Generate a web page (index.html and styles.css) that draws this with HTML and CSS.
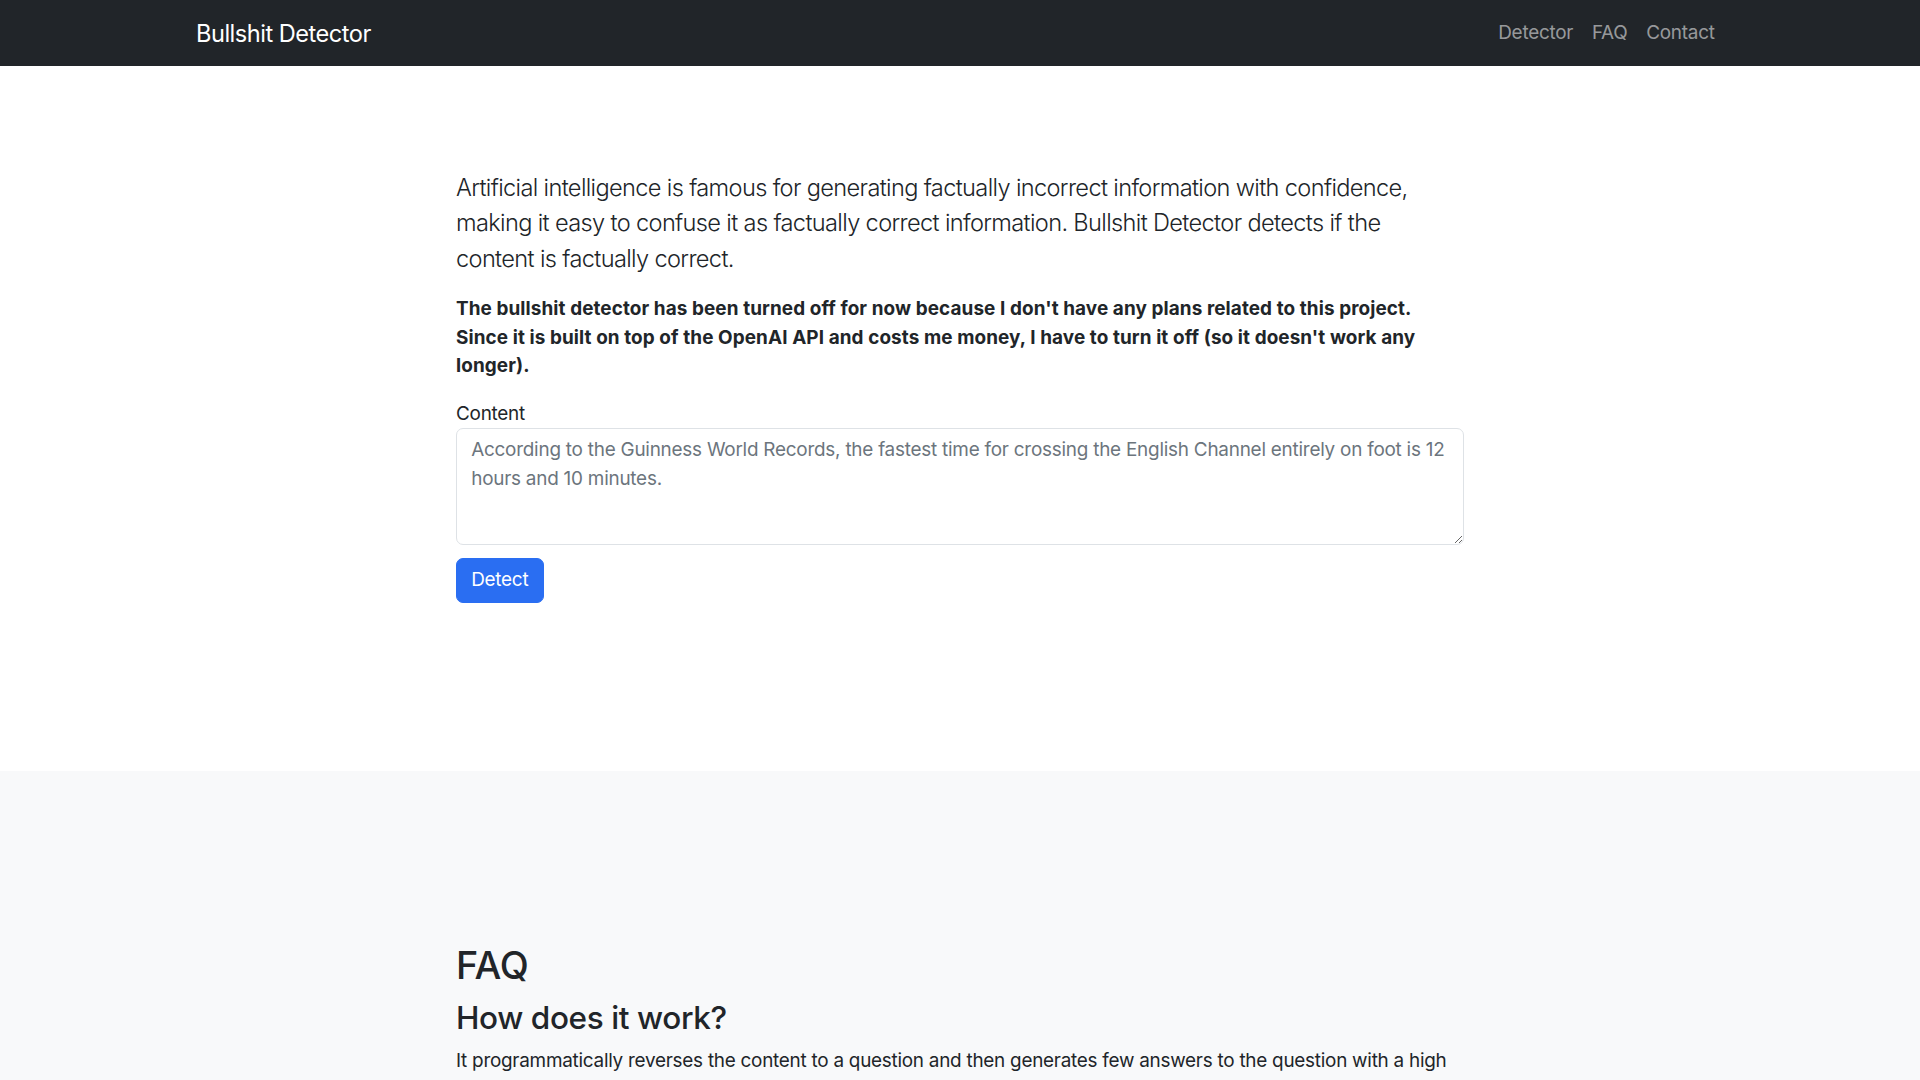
FILE: index.html
```html
<!DOCTYPE html>
<html lang="en">
<head>
<meta charset="utf-8">
<title>Bullshit Detector</title>
<link rel="stylesheet" href="styles.css">
</head>
<body>
<nav class="navbar">
  <div class="nav-inner">
    <a class="brand" href="#">Bullshit Detector</a>
    <ul class="nav-links">
      <li><a href="#detector">Detector</a></li>
      <li><a href="#faq">FAQ</a></li>
      <li><a href="#contact">Contact</a></li>
    </ul>
  </div>
</nav>

<section class="detector" id="detector">
  <div class="col">
    <p class="lead">Artificial intelligence is famous for generating factually incorrect information with confidence, making it easy to confuse it as factually correct information. Bullshit Detector detects if the content is factually correct.</p>
    <p class="notice">The bullshit detector has been turned off for now because I don't have any plans related to this project. Since it is built on top of the OpenAI API and costs me money, I have to turn it off (so it doesn't work any longer).</p>
    <form class="form">
      <label class="form-label" for="content">Content</label>
      <textarea class="form-control" id="content">According to the Guinness World Records, the fastest time for crossing the English Channel entirely on foot is 12 hours and 10 minutes.</textarea>
      <button class="btn" type="button">Detect</button>
    </form>
  </div>
</section>

<section class="faq" id="faq">
  <div class="col">
    <h2 class="faq-title">FAQ</h2>
    <h3 class="faq-q">How does it work?</h3>
    <p class="faq-a">It programmatically reverses the content to a question and then generates few answers to the question with a high</p>
  </div>
</section>
</body>
</html>
```

FILE: styles.css
```css
* { box-sizing: border-box; }

html, body {
  margin: 0;
  padding: 0;
}

body {
  font-family: Inter, "Noto Sans", "Liberation Sans", sans-serif;
  font-size: 18.9px;
  line-height: 1.5;
  color: #212529;
  background: #fff;
  letter-spacing: -0.25px;
}

a { text-decoration: none; }

.navbar {
  background: #212529;
  height: 66px;
}

.nav-inner {
  height: 100%;
  padding: 0 196px;
  display: flex;
  align-items: center;
  justify-content: space-between;
}

.brand {
  color: #fff;
  font-size: 23.6px;
  line-height: 35px;
  letter-spacing: -0.5px;
}

.nav-links {
  list-style: none;
  margin: 0;
  padding: 0;
  display: flex;
}

.nav-links a {
  display: block;
  padding: 0 9.4px;
  color: rgba(255, 255, 255, 0.55);
  line-height: 28px;
}

.col {
  max-width: 1008px;
  margin: 0 auto;
}

.detector {
  padding: 104px 0 168px;
}

.lead {
  font-size: 23.6px;
  line-height: 35.4px;
  font-weight: 300;
  letter-spacing: -0.65px;
  margin: 0 0 19px;
}

.notice {
  font-weight: 700;
  line-height: 28.3px;
  letter-spacing: 0.1px;
  margin: 0 0 20px;
}

.form {
  display: flex;
  flex-direction: column;
  align-items: flex-start;
}

.form-label {
  line-height: 28.3px;
  margin-bottom: 0;
}

.form-control {
  width: 100%;
  height: 117px;
  padding: 7px 14.2px;
  font: inherit;
  letter-spacing: -0.23px;
  line-height: 28.3px;
  color: #6c757d;
  border: 1px solid #dee2e6;
  border-radius: 7px;
  background: #fff;
  resize: vertical;
}

.btn {
  margin-top: 13px;
  font: inherit;
  letter-spacing: inherit;
  line-height: 28.3px;
  padding: 7px 14.2px;
  color: #fff;
  background: #2a6ef2;
  border: 1px solid #2a6ef2;
  border-radius: 7px;
  cursor: pointer;
}

.faq {
  background: #f8f9fa;
  padding: 172px 0 160px;
}

.faq-title {
  font-size: 37.8px;
  font-weight: 500;
  line-height: 45.4px;
  margin: 0 0 10px;
}

.faq-q {
  font-size: 31.5px;
  font-weight: 500;
  line-height: 39.6px;
  letter-spacing: -0.4px;
  margin: 0 0 9px;
}

.faq-a {
  margin: 0;
  line-height: 28.3px;
}
```
